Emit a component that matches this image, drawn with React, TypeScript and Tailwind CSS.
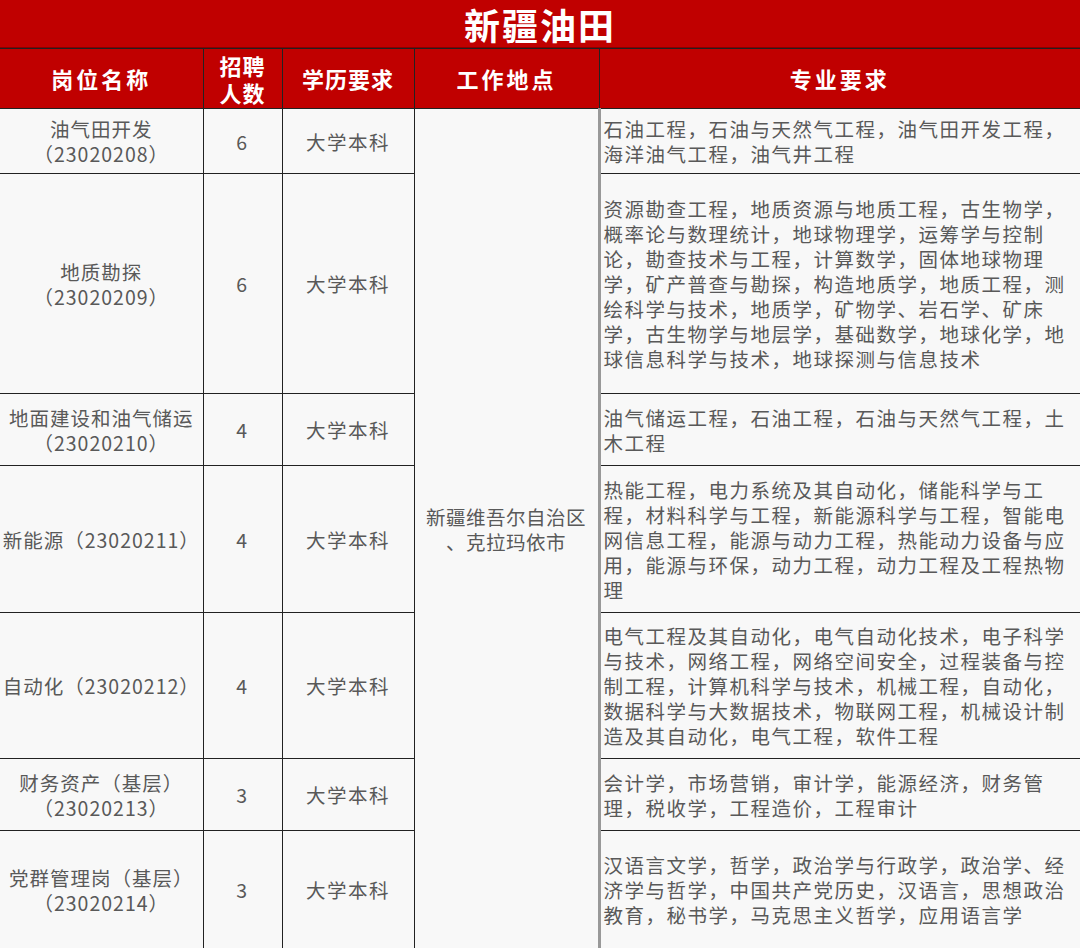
const font = { fontFamily: '"Noto Sans CJK SC", "Noto Sans", sans-serif' };

const rows: { name: string[]; n: string; h: string; spec: string[] }[] = [
  { name: ["油气田开发", "（23020208）"], n: "6", h: "h-[65px]", spec: ["石油工程，石油与天然气工程，油气田开发工程，", "海洋油气工程，油气井工程"] },
  {
    name: ["地质勘探", "（23020209）"], n: "6", h: "h-[220px]",
    spec: [
      "资源勘查工程，地质资源与地质工程，古生物学，",
      "概率论与数理统计，地球物理学，运筹学与控制",
      "论，勘查技术与工程，计算数学，固体地球物理",
      "学，矿产普查与勘探，构造地质学，地质工程，测",
      "绘科学与技术，地质学，矿物学、岩石学、矿床",
      "学，古生物学与地层学，基础数学，地球化学，地",
      "球信息科学与技术，地球探测与信息技术",
    ],
  },
  { name: ["地面建设和油气储运", "（23020210）"], n: "4", h: "h-[72px]", spec: ["油气储运工程，石油工程，石油与天然气工程，土", "木工程"] },
  {
    name: ["新能源（23020211）"], n: "4", h: "h-[147px]",
    spec: ["热能工程，电力系统及其自动化，储能科学与工", "程，材料科学与工程，新能源科学与工程，智能电", "网信息工程，能源与动力工程，热能动力设备与应", "用，能源与环保，动力工程，动力工程及工程热物", "理"],
  },
  {
    name: ["自动化（23020212）"], n: "4", h: "h-[146px]",
    spec: ["电气工程及其自动化，电气自动化技术，电子科学", "与技术，网络工程，网络空间安全，过程装备与控", "制工程，计算机科学与技术，机械工程，自动化，", "数据科学与大数据技术，物联网工程，机械设计制", "造及其自动化，电气工程，软件工程"],
  },
  { name: ["财务资产（基层）", "（23020213）"], n: "3", h: "h-[72px]", spec: ["会计学，市场营销，审计学，能源经济，财务管", "理，税收学，工程造价，工程审计"] },
  {
    name: ["党群管理岗（基层）", "（23020214）"], n: "3", h: "h-[118px]",
    spec: ["汉语言文学，哲学，政治学与行政学，政治学、经", "济学与哲学，中国共产党历史，汉语言，思想政治", "教育，秘书学，马克思主义哲学，应用语言学"],
  },
];

export default function App() {
  const td = "border border-[#222] text-center align-middle";
  return (
    <div className="w-[1080px] h-[948px] overflow-hidden bg-[#f8f8f8] text-[#595959]" style={font}>
      <div className="h-[48px] bg-[#c00000] text-white text-[36px] font-bold tracking-[2px] flex items-center justify-center border-b border-[#8a0000]">
        新疆油田
      </div>
      <table className="w-[1080px] border-collapse table-fixed text-[19.5px] leading-[25px] tracking-[1.5px]">
        <colgroup>
          <col className="w-[203px]" />
          <col className="w-[79px]" />
          <col className="w-[132px]" />
          <col className="w-[185px]" />
          <col className="w-[481px]" />
        </colgroup>
        <thead>
          <tr className="h-[60px] bg-[#c00000] text-white text-[22px] font-bold leading-[27px] tracking-[3px]">
            <th className="border border-[#222] border-l-0">岗位名称</th>
            <th className="border border-[#222] tracking-[1px]">招聘<br />人数</th>
            <th className="border border-[#222] tracking-[1px]">学历要求</th>
            <th className="border border-[#222]">工作地点</th>
            <th className="border border-[#222] border-r-0">专业要求</th>
          </tr>
        </thead>
        <tbody>
          {rows.map((r, i) => (
            <tr key={i} className={r.h}>
              <td className={td + " border-l-0 whitespace-nowrap tracking-[1px]"}>
                {r.name.map((l, j) => <div key={j}>{l}</div>)}
              </td>
              <td className={td}>{r.n}</td>
              <td className={td}>大学本科</td>
              {i === 0 && (
                <td rowSpan={7} className={td + " whitespace-nowrap tracking-[0.5px]"}>
                  <div>新疆维吾尔自治区</div>
                  <div>、克拉玛依市</div>
                </td>
              )}
              <td className="border border-[#222] border-l-[3px] border-l-[#999] border-r-0 text-left align-middle pl-[3px] whitespace-nowrap">
                {r.spec.map((l, j) => <div key={j}>{l}</div>)}
              </td>
            </tr>
          ))}
        </tbody>
      </table>
    </div>
  );
}
